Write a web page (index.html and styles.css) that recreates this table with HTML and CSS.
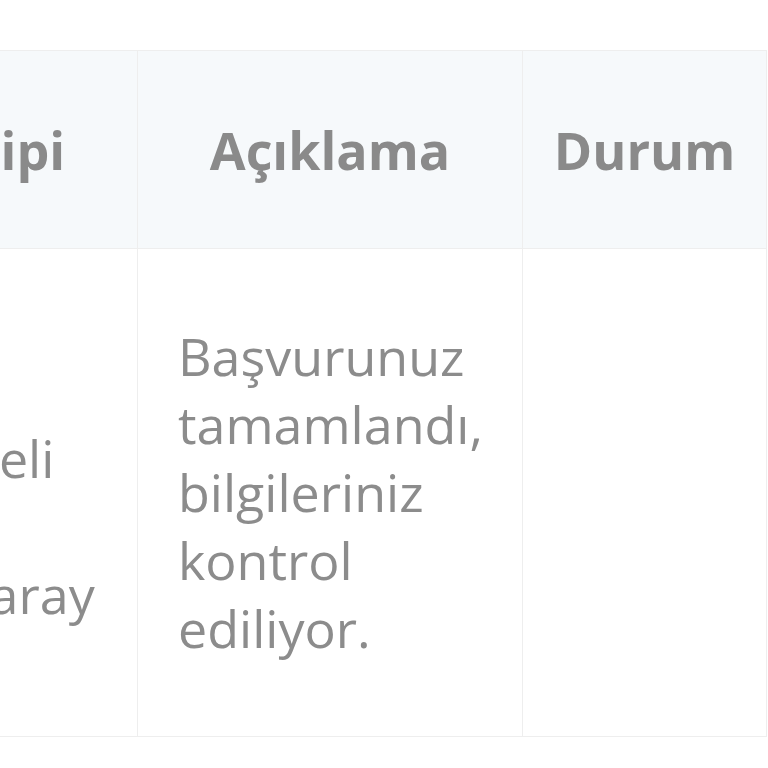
FILE: index.html
```html
<!DOCTYPE html>
<html lang="tr">
<head>
<meta charset="utf-8">
<link rel="stylesheet" href="styles.css">
</head>
<body>
<div class="wrap">
  <table class="grid">
    <colgroup>
      <col class="c1">
      <col class="c2">
      <col class="c3">
    </colgroup>
    <thead>
      <tr>
        <th>İş Tipi</th>
        <th>Açıklama</th>
        <th>Durum</th>
      </tr>
    </thead>
    <tbody>
      <tr>
        <td>İl<br>Kocaeli<br>İzmit<br>Gülsaray</td>
        <td>Başvurunuz tamamlandı, bilgileriniz kontrol ediliyor.</td>
        <td></td>
      </tr>
    </tbody>
  </table>
</div>
</body>
</html>
```

FILE: styles.css
```css
html, body {
  margin: 0;
  padding: 0;
  background: #ffffff;
}
body {
  width: 768px;
  height: 768px;
  overflow: hidden;
  font-family: "Open Sans", "Liberation Sans", sans-serif;
}
.wrap {
  padding-top: 50px;
}
.grid {
  border-collapse: collapse;
  table-layout: fixed;
  width: 925px;
  margin-left: -159px;
}
.c1 { width: 296px; }
.c2 { width: 385px; }
.c3 { width: 244px; }
.grid th,
.grid td {
  border: 1px solid #eeeeee;
}
.grid th {
  height: 197px;
  padding: 0 10px;
  background: #f6f9fb;
  color: #8a8a8a;
  font-weight: 700;
  font-size: 52px;
  line-height: 68px;
  text-align: center;
  vertical-align: middle;
  white-space: nowrap;
}
.grid td {
  height: 485px;
  padding: 0 38px 2px 40px;
  color: #8c8c8c;
  font-weight: 400;
  font-size: 52px;
  line-height: 68px;
  text-align: left;
  vertical-align: middle;
}
```
